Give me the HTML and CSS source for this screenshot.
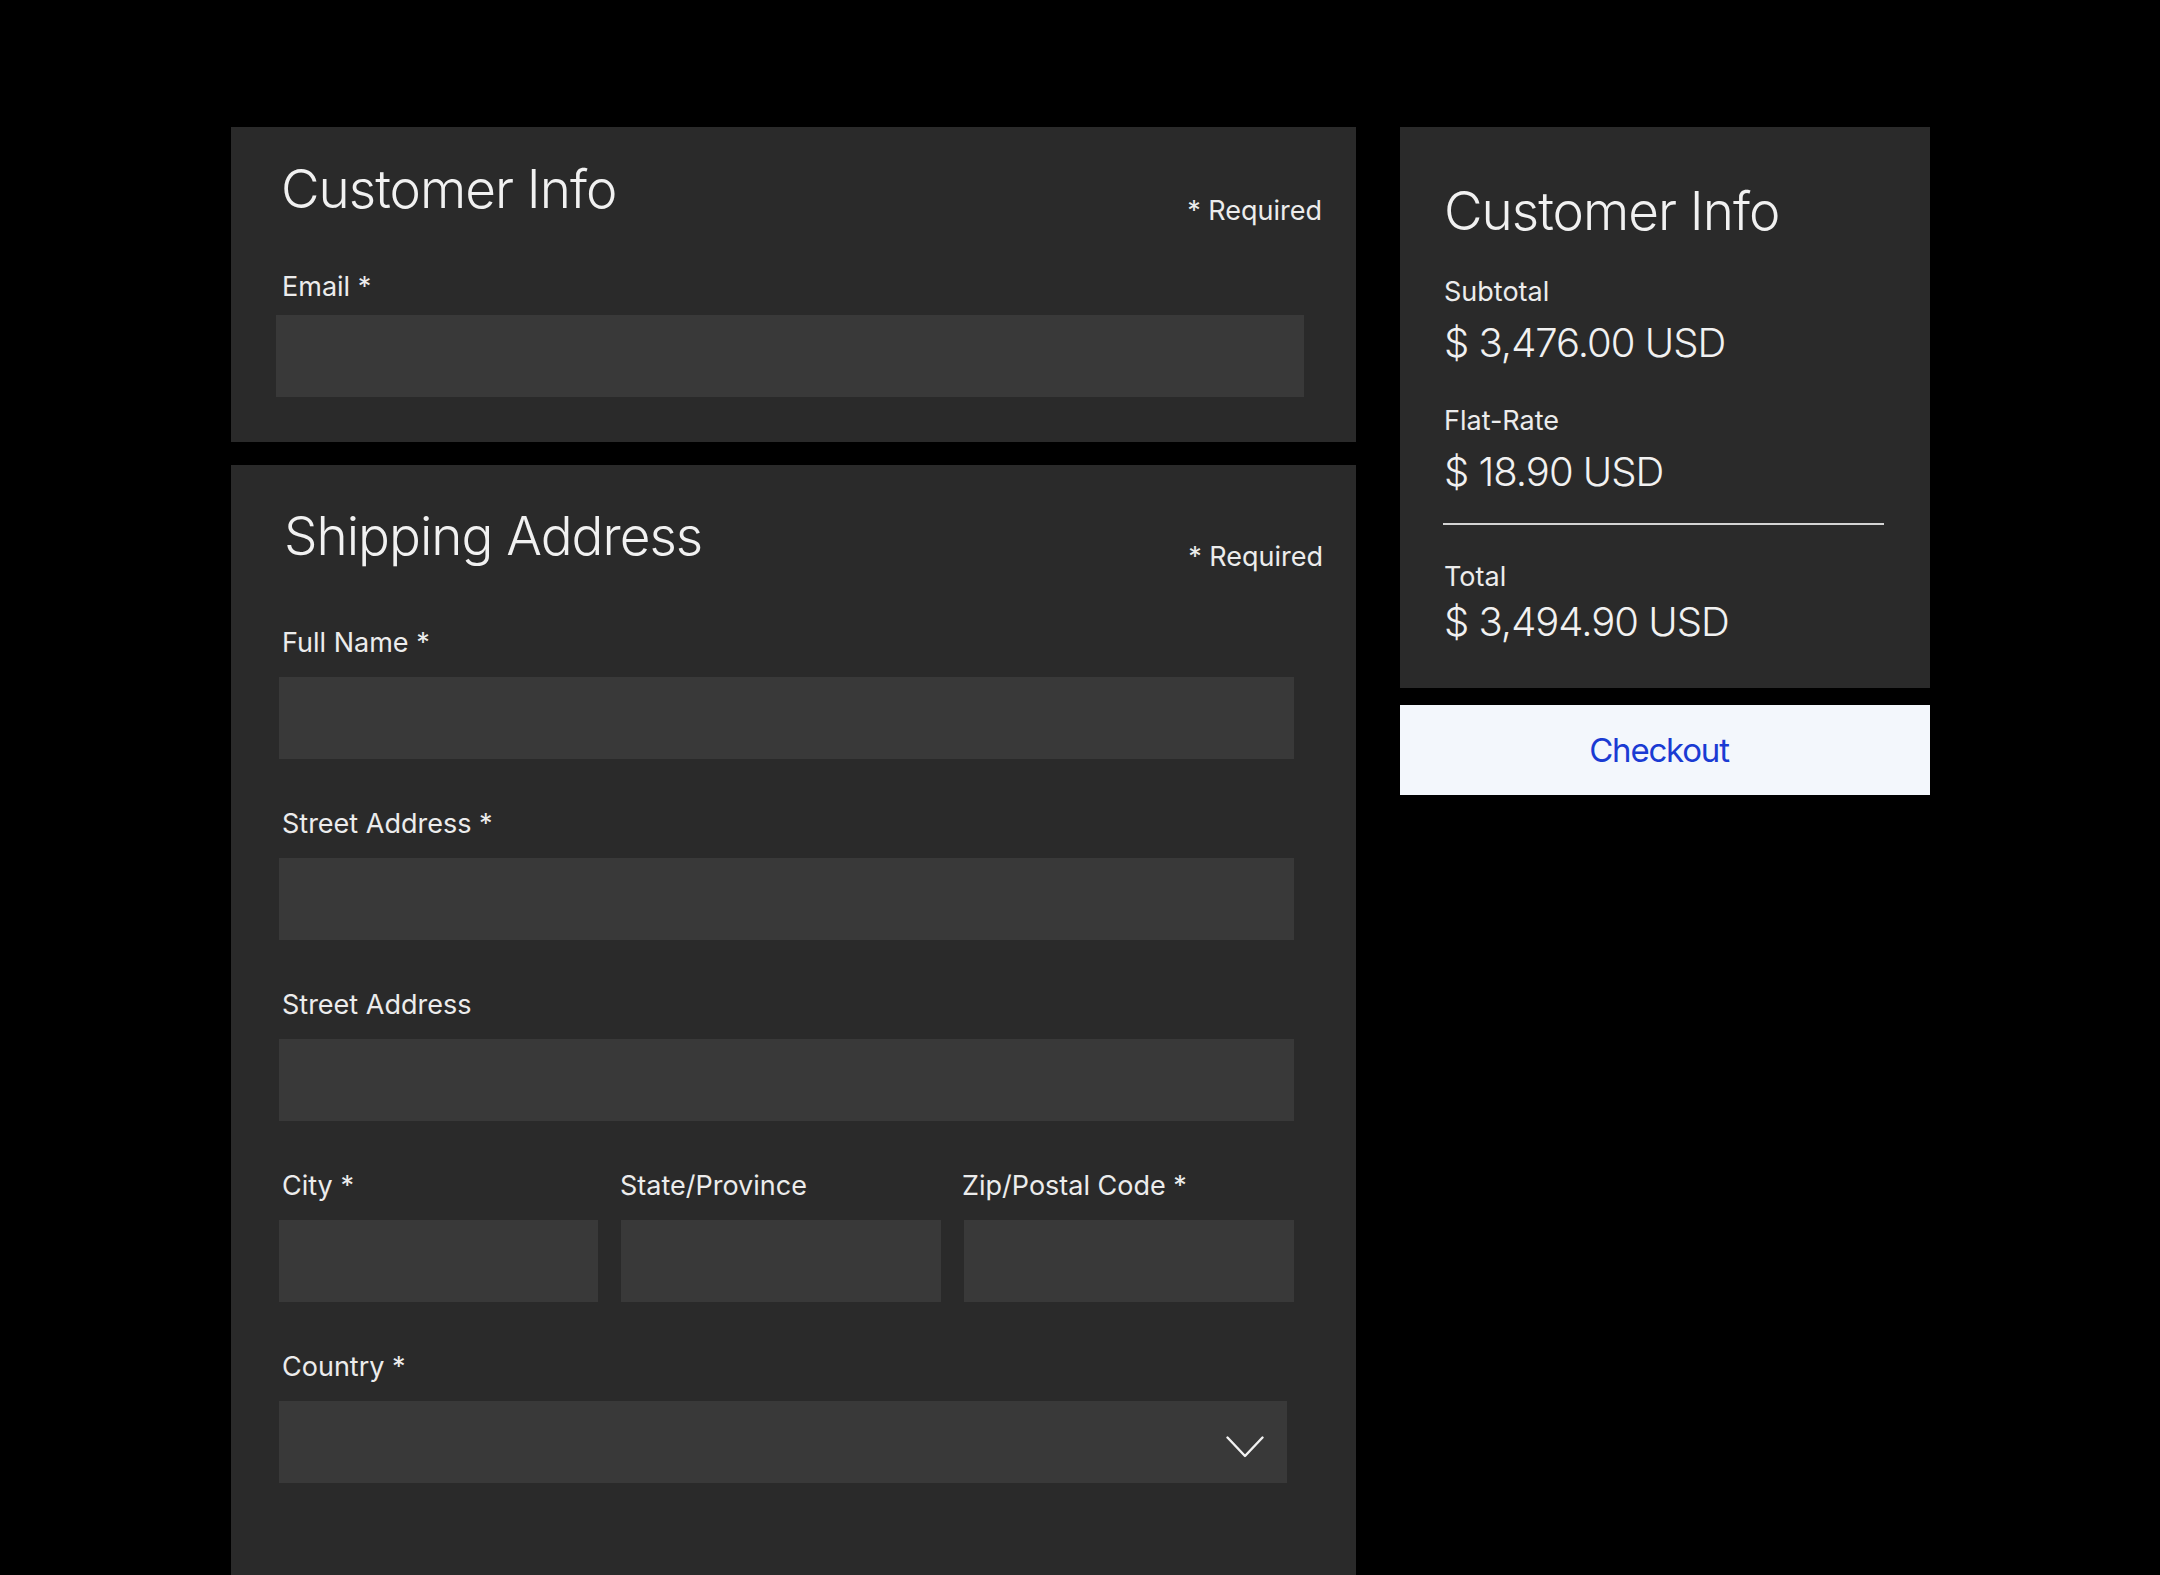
FILE: index.html
```html
<!DOCTYPE html>
<html lang="en">
<head>
<meta charset="utf-8">
<title>Checkout</title>
<link rel="stylesheet" href="styles.css">
</head>
<body>
<main class="page">
  <div class="col-left">
    <section class="card card-info">
      <div class="card-head">
        <h2 class="card-title">Customer Info</h2>
        <span class="required">* Required</span>
      </div>
      <div class="field field-email">
        <label class="label" for="email">Email *</label>
        <input class="input input-email" id="email" type="email">
      </div>
    </section>

    <section class="card card-ship">
      <div class="card-head">
        <h2 class="card-title">Shipping Address</h2>
        <span class="required">* Required</span>
      </div>
      <div class="ship-body">
        <div class="field">
          <label class="label" for="name">Full Name *</label>
          <input class="input input-wide" id="name" type="text">
        </div>
        <div class="field">
          <label class="label" for="street1">Street Address *</label>
          <input class="input input-wide" id="street1" type="text">
        </div>
        <div class="field">
          <label class="label" for="street2">Street Address</label>
          <input class="input input-wide" id="street2" type="text">
        </div>
        <div class="field-row">
          <div class="field">
            <label class="label" for="city">City *</label>
            <input class="input" id="city" type="text">
          </div>
          <div class="field">
            <label class="label label-tight" for="state">State/Province</label>
            <input class="input" id="state" type="text">
          </div>
          <div class="field">
            <label class="label label-tighter" for="zip">Zip/Postal Code *</label>
            <input class="input" id="zip" type="text">
          </div>
        </div>
        <div class="field">
          <span class="label">Country *</span>
          <div class="select" role="combobox" aria-expanded="false">
            <svg class="chevron" width="38" height="22" viewBox="0 0 38 22" aria-hidden="true">
              <polyline points="1.5,1.5 19,20 36.5,1.5" fill="none" stroke="#f2f2f2" stroke-width="2.4" stroke-linecap="round" stroke-linejoin="round"/>
            </svg>
          </div>
        </div>
      </div>
    </section>
  </div>

  <aside class="col-right">
    <section class="card card-summary">
      <h2 class="card-title summary-title">Customer Info</h2>
      <div class="sum-label sum-first">Subtotal</div>
      <div class="sum-value">$ 3,476.00 USD</div>
      <div class="sum-label sum-next">Flat-Rate</div>
      <div class="sum-value">$ 18.90 USD</div>
      <hr class="divider">
      <div class="sum-label sum-total">Total</div>
      <div class="sum-value sum-value-total">$ 3,494.90 USD</div>
    </section>
    <button class="checkout" type="button">Checkout</button>
  </aside>
</main>
</body>
</html>
```

FILE: styles.css
```css
* {
  box-sizing: border-box;
}

html, body {
  margin: 0;
  padding: 0;
  background: #000000;
}

body {
  font-family: Inter, "Noto Sans", "Liberation Sans", sans-serif;
  color: #efefef;
  min-height: 1575px;
  overflow: hidden;
}

.page {
  display: flex;
  align-items: flex-start;
  gap: 44px;
  padding: 127px 0 0 231px;
}

.col-left {
  width: 1125px;
  display: flex;
  flex-direction: column;
  gap: 23px;
}

.col-right {
  width: 530px;
  display: flex;
  flex-direction: column;
  gap: 17px;
}

.card {
  background: #2a2a2a;
}

.card-head {
  display: flex;
  justify-content: space-between;
  align-items: flex-start;
}

.card-title {
  margin: 0 0 0 5px;
  font-size: 53px;
  line-height: 1.2;
  font-weight: 300;
  letter-spacing: -1px;
  color: #f1f1f1;
}

.required {
  font-size: 27px;
  line-height: 1.2;
  font-weight: 400;
  color: #ececec;
}

.label {
  display: block;
  font-size: 27px;
  line-height: 1.2;
  font-weight: 400;
  letter-spacing: 0;
  color: #ececec;
}

.input {
  display: block;
  width: 100%;
  height: 82px;
  margin: 18px 0 0;
  padding: 0 20px;
  border: none;
  outline: none;
  background: #393939;
  color: #efefef;
  font: inherit;
  font-size: 27px;
}

/* Customer info card */
.card-info {
  height: 315px;
  padding: 31px 34px 0 45px;
}

.card-info .required {
  margin-top: 37px;
}

.field-email {
  margin-top: 43.5px;
}

.field-email .label {
  margin-left: 6px;
}

.input-email {
  width: 1028px;
  margin-top: 12px;
}

/* Shipping card */
.card-ship {
  padding: 40px 33px 100px 48px;
}

.card-ship .card-title {
  margin-left: 5px;
}

.card-ship .required {
  margin-top: 36px;
}

.ship-body {
  margin-top: 53.2px;
  display: flex;
  flex-direction: column;
  gap: 48.6px;
}

.card-ship .label {
  margin-left: 3px;
}

.card-ship .label-tight {
  margin-left: -1px;
}

.card-ship .label-tighter {
  margin-left: -2px;
}

.input-wide {
  width: 1015px;
}

.field-row {
  display: grid;
  grid-template-columns: 319px 320px 330px;
  column-gap: 23px;
}

.select {
  width: 1008px;
  height: 82px;
  margin-top: 18px;
  background: #393939;
  display: flex;
  align-items: center;
  justify-content: flex-end;
  padding: 10px 23px 0 0;
}

.chevron {
  display: block;
}

/* Summary card */
.card-summary {
  padding: 53px 46px 42px 44px;
}

.summary-title {
  margin: 0;
}

.sum-label {
  font-size: 27px;
  line-height: 1.2;
  font-weight: 400;
  letter-spacing: 0;
  color: #ececec;
}

.sum-first {
  margin-top: 32.4px;
}

.sum-next {
  margin-top: 37.5px;
}

.sum-total {
  margin-top: 35.5px;
}

.sum-value {
  margin-top: 11px;
  font-size: 40px;
  line-height: 1.2;
  font-weight: 300;
  letter-spacing: -1px;
  color: #f1f1f1;
}

.sum-value-total {
  margin-top: 5px;
}

.divider {
  margin: 27px 0 0 -1px;
  width: 441px;
  height: 2px;
  border: none;
  background: #d4d4d4;
}

.checkout {
  display: block;
  width: 100%;
  height: 90px;
  margin: 0;
  padding: 0 12px 0 0;
  border: none;
  background: #f3f7fc;
  color: #1a3bd3;
  font-family: Inter, "Noto Sans", "Liberation Sans", sans-serif;
  font-size: 33px;
  font-weight: 400;
  letter-spacing: -1.2px;
  cursor: pointer;
}
```
